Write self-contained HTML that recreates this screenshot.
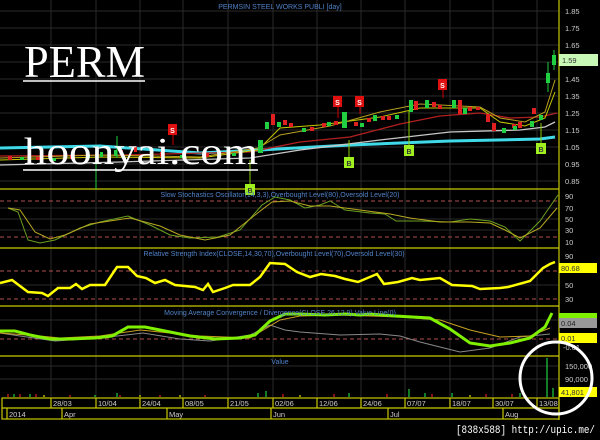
<!DOCTYPE html>
<html><head><meta charset="utf-8"><style>
html,body{margin:0;padding:0;background:#000;width:600px;height:440px;overflow:hidden}
svg{display:block}
text{font-family:"Liberation Sans",sans-serif}
</style></head><body>
<svg width="600" height="440" viewBox="0 0 600 440" xmlns="http://www.w3.org/2000/svg">
<rect width="600" height="440" fill="#000"/>
<g stroke="#2a2a2a" stroke-width="1">
<line x1="51" y1="0" x2="51" y2="397"/><line x1="96" y1="0" x2="96" y2="397"/><line x1="140" y1="0" x2="140" y2="397"/><line x1="183" y1="0" x2="183" y2="397"/><line x1="228" y1="0" x2="228" y2="397"/><line x1="273" y1="0" x2="273" y2="397"/><line x1="317" y1="0" x2="317" y2="397"/><line x1="361" y1="0" x2="361" y2="397"/><line x1="405" y1="0" x2="405" y2="397"/><line x1="450" y1="0" x2="450" y2="397"/><line x1="493" y1="0" x2="493" y2="397"/><line x1="537" y1="0" x2="537" y2="397"/>
<line x1="0" y1="11" x2="559" y2="11"/><line x1="0" y1="28" x2="559" y2="28"/><line x1="0" y1="45" x2="559" y2="45"/><line x1="0" y1="62" x2="559" y2="62"/><line x1="0" y1="79" x2="559" y2="79"/><line x1="0" y1="96" x2="559" y2="96"/><line x1="0" y1="113" x2="559" y2="113"/><line x1="0" y1="130" x2="559" y2="130"/><line x1="0" y1="147" x2="559" y2="147"/><line x1="0" y1="164" x2="559" y2="164"/><line x1="0" y1="181" x2="559" y2="181"/>
<line x1="0" y1="208" x2="559" y2="208"/><line x1="0" y1="219" x2="559" y2="219"/><line x1="0" y1="230" x2="559" y2="230"/>
<line x1="0" y1="285" x2="559" y2="285"/><line x1="0" y1="320" x2="559" y2="320"/><line x1="0" y1="379" x2="559" y2="379"/><line x1="0" y1="366" x2="559" y2="366"/>
</g>
<g stroke="#c8c800" stroke-width="1.2" fill="none">
<line x1="0" y1="189" x2="559" y2="189"/><line x1="0" y1="248" x2="559" y2="248"/><line x1="0" y1="306" x2="559" y2="306"/><line x1="0" y1="356" x2="559" y2="356"/>
<line x1="559" y1="0" x2="559" y2="420"/>
<rect x="2" y="398" width="557" height="21"/><line x1="2" y1="408" x2="559" y2="408"/>
<line x1="51" y1="398" x2="51" y2="408"/><line x1="96" y1="398" x2="96" y2="408"/><line x1="140" y1="398" x2="140" y2="408"/><line x1="183" y1="398" x2="183" y2="408"/><line x1="228" y1="398" x2="228" y2="408"/><line x1="273" y1="398" x2="273" y2="408"/><line x1="317" y1="398" x2="317" y2="408"/><line x1="361" y1="398" x2="361" y2="408"/><line x1="405" y1="398" x2="405" y2="408"/><line x1="450" y1="398" x2="450" y2="408"/><line x1="493" y1="398" x2="493" y2="408"/><line x1="537" y1="398" x2="537" y2="408"/>
<line x1="7" y1="408" x2="7" y2="419"/><line x1="62" y1="408" x2="62" y2="419"/><line x1="167" y1="408" x2="167" y2="419"/><line x1="271" y1="408" x2="271" y2="419"/><line x1="388" y1="408" x2="388" y2="419"/><line x1="503" y1="408" x2="503" y2="419"/>
</g>
<g stroke="#b05050" stroke-width="1" stroke-dasharray="4,3">
<line x1="0" y1="201" x2="559" y2="201"/><line x1="0" y1="237" x2="559" y2="237"/>
<line x1="0" y1="271" x2="559" y2="271"/><line x1="0" y1="299" x2="559" y2="299"/>
<line x1="0" y1="339" x2="559" y2="339"/>
</g>
<polyline fill="none" stroke="#3fd9e8" stroke-width="3" points="0,148 100,146 200,153 260,150 350,145 450,141 540,139 555,137"/>
<polyline fill="none" stroke="#c8c8c8" stroke-width="1.3" points="0,165 120,162 250,158 300,150 380,140 450,132 520,130 545,127 555,122"/>
<polyline fill="none" stroke="#b02020" stroke-width="1.3" points="0,156 120,155 250,152 300,142 350,137 400,124 440,116 480,113 510,118 540,117 557,113"/>
<polyline fill="none" stroke="#c8c800" stroke-width="1" points="0,160 100,157 200,158 258,150 280,128 320,125 380,117 420,108 480,108 500,122 525,126 545,118 555,92"/>
<polyline fill="none" stroke="#b8a020" stroke-width="1" points="0,158 100,155 200,157 258,148 280,135 330,126 380,112 420,104 480,107 500,118 525,122 545,112 555,80"/>
<g fill="#e02020">
<rect x="8" y="156" width="4" height="4"/><rect x="36" y="157" width="4" height="3"/><rect x="70" y="155" width="4" height="4"/><rect x="120" y="150" width="3" height="6"/><rect x="134" y="147" width="3" height="5"/><rect x="160" y="152" width="4" height="5"/><rect x="205" y="153" width="4" height="4"/>
<rect x="271" y="114" width="4" height="11"/><rect x="283" y="120" width="4" height="5"/><rect x="289" y="123" width="4" height="4"/><rect x="310" y="127" width="4" height="4"/><rect x="322" y="123" width="4" height="4"/><rect x="334" y="121" width="4" height="4"/><rect x="354" y="122" width="4" height="4"/><rect x="367" y="118" width="4" height="4"/><rect x="381" y="116" width="4" height="4"/><rect x="387" y="116" width="4" height="4"/>
<rect x="414" y="101" width="4" height="9"/><rect x="432" y="102" width="4" height="5"/><rect x="438" y="105" width="4" height="4"/><rect x="458" y="100" width="4" height="14"/><rect x="468" y="107" width="4" height="4"/><rect x="476" y="107" width="4" height="3"/><rect x="486" y="114" width="4" height="8"/><rect x="492" y="123" width="4" height="8"/><rect x="512" y="124" width="4" height="4"/><rect x="518" y="122" width="4" height="6"/><rect x="532" y="108" width="4" height="6"/>
</g>
<g fill="#20d040">
<rect x="20" y="157" width="4" height="3"/><rect x="52" y="158" width="4" height="3"/><rect x="86" y="155" width="4" height="3"/><rect x="100" y="152" width="3" height="5"/><rect x="114" y="150" width="3" height="6"/><rect x="180" y="155" width="4" height="3"/><rect x="232" y="153" width="4" height="3"/>
<rect x="258" y="140" width="5" height="13"/><rect x="265" y="122" width="4" height="7"/><rect x="277" y="122" width="4" height="5"/><rect x="302" y="128" width="4" height="4"/><rect x="327" y="122" width="4" height="4"/><rect x="342" y="112" width="5" height="16"/><rect x="360" y="123" width="4" height="4"/><rect x="373" y="115" width="4" height="6"/><rect x="395" y="115" width="4" height="4"/><rect x="409" y="100" width="4" height="12"/><rect x="425" y="100" width="4" height="8"/><rect x="452" y="100" width="4" height="8"/><rect x="463" y="108" width="4" height="6"/><rect x="502" y="128" width="4" height="5"/><rect x="513" y="126" width="4" height="4"/><rect x="530" y="121" width="4" height="6"/><rect x="539" y="115" width="4" height="5"/><rect x="546" y="73" width="4" height="10"/><rect x="552" y="55" width="4" height="10"/>
</g>
<g stroke="#20d040" stroke-width="1"><line x1="548" y1="62" x2="548" y2="92"/><line x1="554" y1="50" x2="554" y2="70"/><line x1="117" y1="136" x2="117" y2="158"/><line x1="96" y1="146" x2="96" y2="189"/></g>
<g stroke="#c00" stroke-width="1"><line x1="173" y1="135" x2="173" y2="145"/><line x1="338" y1="107" x2="338" y2="118"/><line x1="360" y1="107" x2="360" y2="114"/><line x1="443" y1="90" x2="443" y2="98"/></g>
<g stroke="#8c0" stroke-width="1"><line x1="250" y1="160" x2="250" y2="184"/><line x1="349" y1="140" x2="349" y2="157"/><line x1="409" y1="110" x2="409" y2="145"/><line x1="541" y1="123" x2="541" y2="143"/></g>
<g fill="#e01010"><rect x="168" y="124" width="9" height="11"/><rect x="333" y="96" width="9" height="11"/><rect x="355" y="96" width="9" height="11"/><rect x="438" y="79" width="9" height="11"/></g>
<g fill="#a0f020"><rect x="245" y="184" width="10" height="11"/><rect x="344" y="157" width="10" height="11"/><rect x="404" y="145" width="10" height="11"/><rect x="536" y="143" width="10" height="11"/></g>
<g font-size="7" font-weight="bold" fill="#fff" text-anchor="middle"><text x="172.5" y="133">S</text><text x="337.5" y="105">S</text><text x="359.5" y="105">S</text><text x="442.5" y="88">S</text></g>
<g font-size="7" font-weight="bold" fill="#333" text-anchor="middle"><text x="250" y="193">B</text><text x="349" y="166">B</text><text x="409" y="154">B</text><text x="541" y="152">B</text></g>
<polyline fill="none" stroke="#6aa020" stroke-width="1" points="8,208 18,212 28,240 40,243 55,240 80,228 100,222 128,216 150,225 170,235 190,238 218,237 240,230 262,205 275,197 290,200 305,208 320,205 330,201 345,210 370,213 385,214 396,221 420,221 450,222 470,219 490,221 505,227 520,241 540,221 558,195"/>
<polyline fill="none" stroke="#b8a820" stroke-width="1" points="8,208 20,210 35,232 50,239 65,235 90,224 130,218 160,226 180,235 205,240 230,235 255,215 272,202 290,201 310,206 330,206 360,210 390,214 410,218 440,222 470,222 490,223 505,230 520,238 540,228 557,208"/>
<polyline fill="none" stroke="#ffff00" stroke-width="2.5" points="0,283 12,280 28,292 42,293 48,296 58,288 70,288 76,284 82,289 90,285 105,285 117,267 128,267 137,276 146,278 155,283 165,280 175,285 195,287 203,290 208,284 213,292 225,288 233,285 250,285 260,277 270,263 285,264 297,272 310,277 321,274 335,276 345,279 358,282 377,274 384,284 398,282 412,278 420,280 440,278 452,285 472,286 480,289 500,288 508,287 530,281 543,268 550,264 555,262"/>
<polyline fill="none" stroke="#888" stroke-width="1" points="0,333 20,336 55,341 100,338 143,333 180,339 210,341 250,335 270,325 285,330 300,332 340,335 380,334 400,336 420,342 440,347 460,352 490,348 520,337 550,334"/>
<polyline fill="none" stroke="#c8a020" stroke-width="1" points="0,333 40,336 60,338 100,336 140,330 200,336 250,338 280,320 300,316 340,315 400,317 440,320 470,330 500,337 530,336 550,328"/>
<polyline fill="none" stroke="#7ff000" stroke-width="3" points="0,331 15,331 30,335 50,339 70,339 95,338 112,336 128,327 145,327 160,330 190,336 215,339 240,338 255,335 270,321 285,314 300,314 325,315 345,314 360,315 370,314 395,316 430,318 450,329 470,343 490,346 510,343 530,338 545,327 552,313"/>
<g stroke-width="1.2">
<g stroke="#e02020"><line x1="8" y1="394" x2="8" y2="397"/><line x1="20" y1="394" x2="20" y2="397"/><line x1="36" y1="394" x2="36" y2="397"/><line x1="70" y1="395" x2="70" y2="397"/><line x1="120" y1="395" x2="120" y2="397"/><line x1="160" y1="395" x2="160" y2="397"/><line x1="205" y1="395" x2="205" y2="397"/><line x1="283" y1="394" x2="283" y2="397"/><line x1="334" y1="394" x2="334" y2="397"/><line x1="387" y1="394" x2="387" y2="397"/><line x1="432" y1="394" x2="432" y2="397"/><line x1="486" y1="394" x2="486" y2="397"/><line x1="512" y1="394" x2="512" y2="397"/></g>
<g stroke="#20d040"><line x1="14" y1="394" x2="14" y2="397"/><line x1="30" y1="394" x2="30" y2="397"/><line x1="95" y1="395" x2="95" y2="397"/><line x1="117" y1="393" x2="117" y2="397"/><line x1="258" y1="393" x2="258" y2="397"/><line x1="266" y1="391" x2="266" y2="397"/><line x1="349" y1="393" x2="349" y2="397"/><line x1="409" y1="389" x2="409" y2="397"/><line x1="425" y1="393" x2="425" y2="397"/><line x1="452" y1="393" x2="452" y2="397"/><line x1="520" y1="393" x2="520" y2="397"/><line x1="547" y1="358" x2="547" y2="397"/><line x1="553" y1="388" x2="553" y2="397"/></g>
<g stroke="#e0e000"><line x1="44" y1="395" x2="44" y2="397"/><line x1="140" y1="395" x2="140" y2="397"/><line x1="180" y1="395" x2="180" y2="397"/><line x1="300" y1="395" x2="300" y2="397"/><line x1="470" y1="395" x2="470" y2="397"/></g>
</g>
<g font-size="7" fill="#4f82c8" text-anchor="middle">
<text x="280" y="9">PERMSIN STEEL WORKS PUBLI [day]</text>
<text x="280" y="197">Slow Stochastics Oscillator(14,3,3),Overbought Level(80),Oversold Level(20)</text>
<text x="274" y="256">Relative Strength Index(CLOSE,14,30,70),Overbought Level(70),Oversold Level(30)</text>
<text x="280" y="315">Moving Average Convergence / Divergence(CLOSE,26,12,9),Value Line(0)</text>
<text x="280" y="364">Value</text>
</g>
<g font-size="7.5" fill="#ccc">
<text x="565" y="14">1.85</text><text x="565" y="31">1.75</text><text x="565" y="48">1.65</text><text x="565" y="82">1.45</text><text x="565" y="99">1.35</text><text x="565" y="116">1.25</text><text x="565" y="133">1.15</text><text x="565" y="150">1.05</text><text x="565" y="167">0.95</text><text x="565" y="184">0.85</text>
<text x="565" y="199">90</text><text x="565" y="211">70</text><text x="565" y="222">50</text><text x="565" y="233">30</text><text x="565" y="245">10</text>
<text x="565" y="259">90</text><text x="565" y="288">50</text><text x="565" y="302">30</text>
<text x="563" y="350">-0.01</text><text x="565" y="369">150,000</text><text x="565" y="382">90,000</text>
</g>
<rect x="559" y="54" width="39" height="12" fill="#c8f8b8"/><text x="562" y="63" font-size="7.5" fill="#333">1.59</text>
<rect x="559" y="263" width="38" height="10" fill="#ffff00"/><text x="561" y="271" font-size="7.5" fill="#333">80.68</text>
<rect x="559" y="313" width="38" height="5" fill="#7ff000"/>
<rect x="559" y="318" width="38" height="10" fill="#999"/><text x="561" y="326" font-size="7.5" fill="#222">0.04</text>
<rect x="559" y="333" width="38" height="10" fill="#ffff00"/><text x="561" y="341" font-size="7.5" fill="#333">0.01</text>
<rect x="559" y="387" width="38" height="10" fill="#ffff00"/><text x="561" y="395" font-size="7.5" fill="#333">41,801</text>
<g font-size="7.5" fill="#ccc">
<text x="53" y="406">28/03</text><text x="98" y="406">10/04</text><text x="142" y="406">24/04</text><text x="185" y="406">08/05</text><text x="230" y="406">21/05</text><text x="275" y="406">02/06</text><text x="319" y="406">12/06</text><text x="363" y="406">24/06</text><text x="407" y="406">07/07</text><text x="452" y="406">18/07</text><text x="495" y="406">30/07</text><text x="539" y="406">13/08</text>
<text x="9" y="417">2014</text><text x="64" y="417">Apr</text><text x="169" y="417">May</text><text x="273" y="417">Jun</text><text x="390" y="417">Jul</text><text x="505" y="417">Aug</text>
</g>
<circle cx="556" cy="378" r="36" fill="none" stroke="#fff" stroke-width="3"/>
<text x="24" y="77" style="font-family:'Liberation Serif',serif" font-size="45" fill="#fff" textLength="121" lengthAdjust="spacingAndGlyphs">PERM</text>
<line x1="23" y1="81" x2="145" y2="81" stroke="#fff" stroke-width="1.5"/>
<text x="24" y="164" style="font-family:'Liberation Serif',serif" font-size="38" fill="#fff" textLength="234" lengthAdjust="spacingAndGlyphs">hoonyai.com</text>
<line x1="23" y1="170" x2="258" y2="170" stroke="#fff" stroke-width="1.5"/>
<text x="456" y="433" style="font-family:'Liberation Mono',monospace" font-size="11" fill="#fff" textLength="139" lengthAdjust="spacingAndGlyphs">[838x588] http://upic.me/</text>
</svg>
</body></html>
